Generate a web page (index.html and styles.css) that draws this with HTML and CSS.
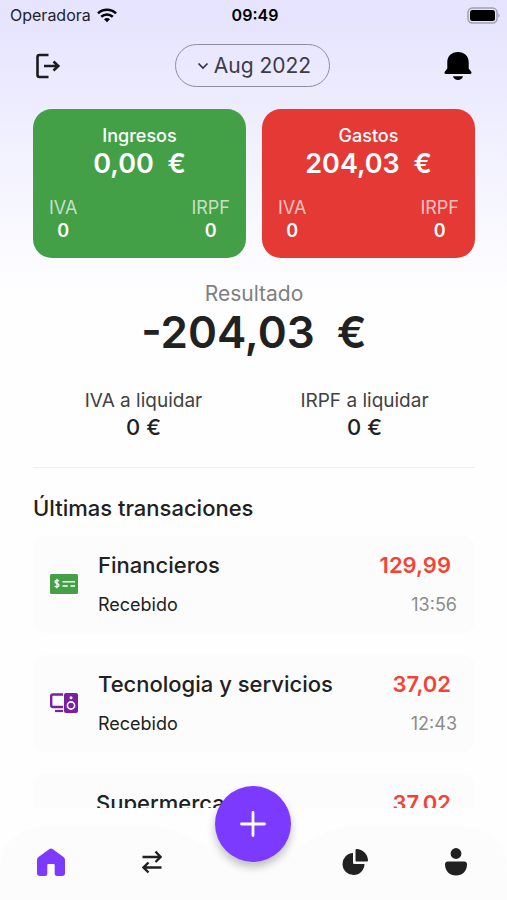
FILE: index.html
```html
<!DOCTYPE html>
<html lang="es">
<head>
    <meta charset="UTF-8">
    <meta name="viewport" content="width=device-width, initial-scale=1.0">
    <title>Resumen</title>
    <link rel="stylesheet" href="styles.css">
</head>
<body>
    <div class="app">
        <!-- Barra de estado -->
        <div class="status-bar">
            <div class="carrier">
                <span>Operadora</span>
                <svg width="20" height="15" viewBox="0 0 20 15" fill="none" stroke="#000" stroke-width="2.6">
                    <path d="M1 5.4C6 .6 14 .6 19 5.4"/>
                    <path d="M4.2 8.8c3.4-3 8.2-3 11.6 0"/>
                    <path d="M7 11.2c1.8-1.6 4.2-1.6 6 0L10 14.2z" fill="#000" stroke="none"/>
                </svg>
            </div>
            <span class="clock">09:49</span>
            <div class="battery">
                <svg width="34" height="17" viewBox="0 0 34 17">
                    <rect x="2" y="1" width="29" height="15" rx="4.5" fill="none" stroke="#a19fb0" stroke-width="1.5"/>
                    <rect x="4" y="3" width="25" height="11" rx="2.5" fill="#000"/>
                    <path d="M32.400 6.5c1.600.6 1.600 3.400 0 4z" fill="#a19fb0"/>
                </svg>
            </div>
        </div>

        <header class="top-bar">
            <button class="icon-button" type="button" aria-label="Salir">
                <svg width="26" height="26" viewBox="0 0 26 26" fill="none" stroke="#1b1b22" stroke-width="2.6">
                    <path d="M13.500 2H4.500Q2.500 2 2.500 4v18Q2.500 24 4.500 24h9"/>
                    <path d="M9 13h14M18.500 8.500 23.300 13l-4.800 4.500"/>
                </svg>
            </button>
            <button class="month" type="button">
                <svg width="12" height="8" viewBox="0 0 12 8" fill="none" stroke="#33333b" stroke-width="1.7">
                    <path d="M1.5 1.5 6 6l4.500-4.500"/>
                </svg>
                Aug 2022
            </button>
            <button class="icon-button" type="button" aria-label="Notificaciones">
                <svg width="28" height="30" viewBox="0 0 28 30" fill="#000">
                    <path d="M14 1C7.600 1 3.300 5.200 3.300 11v6.500L.8 20.800C0 22 .6 23 2 23h24c1.400 0 2-1 1.200-2.200l-2.500-3.300V11C24.700 5.200 20.400 1 14 1z"/>
                    <path d="M9 25.200h10c-.7 2.600-2.600 3.800-5 3.800s-4.300-1.200-5-3.800z"/>
                </svg>
            </button>
        </header>

        <main class="content">
            <section class="cards">
                <div class="card income">
                    <h2>Ingresos</h2>
                    <p class="amount">0,00&nbsp; €</p>
                    <div class="taxes">
                        <p>IVA <strong>0</strong></p>
                        <p>IRPF <strong>0</strong></p>
                    </div>
                </div>
                <div class="card expense">
                    <h2>Gastos</h2>
                    <p class="amount">204,03&nbsp; €</p>
                    <div class="taxes">
                        <p>IVA <strong>0</strong></p>
                        <p>IRPF <strong>0</strong></p>
                    </div>
                </div>
            </section>

            <section class="result">
                <h2>Resultado</h2>
                <p class="total">-204,03&nbsp; €</p>
                <div class="settle">
                    <p>IVA a liquidar <strong>0 €</strong></p>
                    <p>IRPF a liquidar <strong>0 €</strong></p>
                </div>
            </section>

            <section class="transactions">
                <h2>Últimas transaciones</h2>
                <ul>
                    <li class="transaction">
                        <svg width="28" height="20" viewBox="0 0 28 20">
                            <rect x="0" y="0" width="28" height="20" rx="1.5" fill="#43a047"/>
                            <path d="M9 7.200C8.300 6.200 5 6 5 7.900 5 9.900 9 9 9 11.300c0 2-3.300 2-4.300.7M7 4.800v9.400" fill="none" stroke="#fff" stroke-width="1.3"/>
                            <path d="M12.500 7.800H25M12.500 12h5.300M20.500 12H25" stroke="#fff" stroke-width="1.5"/>
                        </svg>
                        <div class="info">
                            <h3>Financieros</h3>
                            <p>Recebido</p>
                        </div>
                        <div class="value">
                            <strong>129,99</strong>
                            <time>13:56</time>
                        </div>
                    </li>
                    <li class="transaction">
                        <svg width="28" height="20" viewBox="0 0 28 20">
                            <path d="M13 1.500H3Q1.200 1.500 1.200 3v9.500Q1.200 14 3 14h10" fill="none" stroke="#7b1fa2" stroke-width="2.4"/>
                            <path d="M5 18h8" stroke="#7b1fa2" stroke-width="2.2"/>
                            <rect x="14" y="0" width="14" height="20" rx="2" fill="#7b1fa2"/>
                            <circle cx="21" cy="4.800" r="1.500" fill="#fff"/>
                            <circle cx="21" cy="12.500" r="3.600" fill="none" stroke="#fff" stroke-width="1.6"/>
                        </svg>
                        <div class="info">
                            <h3>Tecnologia y servicios</h3>
                            <p>Recebido</p>
                        </div>
                        <div class="value">
                            <strong>37,02</strong>
                            <time>12:43</time>
                        </div>
                    </li>
                    <li class="transaction">
                        <svg width="26" height="20" viewBox="0 0 28 20">
                            <path d="M1 2h4l3 11h13l3-8H6" fill="none" stroke="#1e88e5" stroke-width="2"/>
                        </svg>
                        <div class="info">
                            <h3>Supermercado</h3>
                            <p>Recebido</p>
                        </div>
                        <div class="value">
                            <strong>37,02</strong>
                            <time>12:40</time>
                        </div>
                    </li>
                </ul>
            </section>
        </main>

        <!-- Navegación inferior -->
        <nav class="bottom-nav">
            <svg class="nav-shape" viewBox="0 0 507 92" preserveAspectRatio="none" fill="#fcfcfc">
                <path d="M0 92V58C4 22 30 17 75 17h75c35 2 60 30 103 38 43-8 68-36 103-38h75c45 0 72 5 76 41v34z"/>
            </svg>
            <a href="#" aria-label="Inicio">
                <svg width="28" height="28" viewBox="0 0 28 28" fill="#7c3aff">
                    <path d="M12.500.9Q14 0 15.500.9L26.500 9Q28 10.200 28 12v13q0 3-3 3h-5q-2.300 0-2.300-2.300V17q0-1-1-1h-5.400q-1 0-1 1v8.700Q10.300 28 8 28H3q-3 0-3-3V12q0-1.800 1.500-3z"/>
                </svg>
            </a>
            <a href="#" aria-label="Movimientos">
                <svg width="20" height="24" viewBox="0 0 20 24" fill="none" stroke="#212121" stroke-width="2.4">
                    <path d="M.5 7h17.500M13.500 1.500 18.500 7l-5 5M19.500 17.500H2M6.500 12.500l-5 5 5 5"/>
                </svg>
            </a>
            <button class="add" type="button" aria-label="Añadir">
                <svg width="26" height="26" viewBox="0 0 26 26" stroke="#fff" stroke-width="2.800" stroke-linecap="round">
                    <path d="M13 1.500v23M1.500 13h23"/>
                </svg>
            </button>
            <a href="#" aria-label="Informes">
                <svg width="26" height="26" viewBox="0 0 26 26" fill="#212121">
                    <path d="M11 4v9.500q0 1.500 1.500 1.500H22.500A11 11 0 1 1 11 4z"/>
                    <path d="M13.500 1Q13.500 0 14.500 0A11.800 11.800 0 0 1 26 11.500q0 1-1 1H14.500q-1 0-1-1z"/>
                </svg>
            </a>
            <a href="#" aria-label="Perfil">
                <svg width="22" height="28" viewBox="0 0 22 28" fill="#212121">
                    <circle cx="11" cy="5.500" r="5.400"/>
                    <path d="M3 13.500h16q3 0 3 3C22 23 17.500 27.500 11 27.500S0 23 0 16.500q0-3 3-3z"/>
                </svg>
            </a>
        </nav>
    </div>
</body>
</html>
```

FILE: styles.css
```css
* {
    box-sizing: border-box;
}
body {
    margin: 0;
    font-family: Inter, Roboto, sans-serif;
    color: #212121;
    background-color: #fefefe;
}
h2, h3, p, ul {
    margin: 0;
    padding: 0;
    font-weight: 400;
}
svg {
    display: block;
}
button {
    font-family: inherit;
    border: none;
    background: none;
    padding: 0;
    cursor: pointer;
}
.app {
    height: 100vh;
    display: flex;
    flex-direction: column;
    background: linear-gradient(#e5e3fe 0, #eeedfe 110px, #fefeff 290px, #fefefe 320px);
}

/* Barra de estado */
.status-bar {
    display: grid;
    grid-template-columns: 1fr auto 1fr;
    align-items: center;
    height: 30px;
    padding: 0 7px 0 10px;
    font-size: 16px;
    color: #22222a;
}
.carrier {
    display: flex;
    align-items: center;
    gap: 6px;
}
.clock {
    font-weight: 600;
    color: #000;
}
.battery {
    justify-self: end;
}

/* Cabecera */
.top-bar {
    display: flex;
    justify-content: space-between;
    align-items: center;
    padding: 14px 35px 22px;
}
.month {
    display: flex;
    align-items: center;
    gap: 5px;
    height: 43px;
    padding: 0 18px 0 21px;
    border: 1px solid #8f8d9c;
    border-radius: 22px;
    font-size: 21px;
    color: #3c3c45;
}

/* Contenido */
.content {
    flex: 1;
    min-height: 0;
    padding: 0 32px 0 33px;
    overflow-y: auto;
    scrollbar-width: none;
}
.cards {
    display: grid;
    grid-template-columns: 1fr 1fr;
    gap: 16px;
}
.card {
    padding: 15px 16px 16px;
    border-radius: 19px;
    color: #fff;
    text-align: center;
}
.income {
    background-color: #43a047;
}
.expense {
    background-color: #e53935;
}
.card h2 {
    font-size: 18px;
    font-weight: 500;
    line-height: 24px;
}
.amount {
    font-size: 27px;
    font-weight: 600;
    line-height: 32px;
}
.taxes {
    display: flex;
    justify-content: space-between;
    margin-top: 16px;
    font-size: 18px;
    line-height: 23px;
    color: rgba(255, 255, 255, 0.7);
}
.taxes strong {
    display: block;
    font-weight: 600;
    color: #fff;
}
.result {
    padding: 23px 0 27px;
    border-bottom: 1px solid #f0f0f0;
    text-align: center;
}
.result h2 {
    font-size: 21px;
    line-height: 26px;
    color: #7f7f82;
}
.total {
    font-size: 44px;
    font-weight: 600;
    line-height: 50px;
}
.settle {
    display: grid;
    grid-template-columns: 1fr 1fr;
    margin-top: 31px;
    font-size: 19px;
    line-height: 26px;
    color: #424242;
}
.settle strong {
    display: block;
    font-size: 22px;
    font-weight: 500;
    color: #212121;
}

/* Transacciones */
.transactions h2 {
    margin: 26px 0 14px;
    font-size: 22px;
    font-weight: 500;
    line-height: 28px;
}
.transactions ul {
    display: grid;
    gap: 22px;
    list-style: none;
}
.transaction {
    display: flex;
    align-items: center;
    gap: 20px;
    padding: 14px 18px 16px 17px;
    border-radius: 12px;
    background-color: #fcfcfc;
}
.info {
    flex: 1;
}
.info h3,
.value strong {
    font-size: 22px;
    font-weight: 500;
    line-height: 30px;
}
.info p,
.value time {
    font-size: 18px;
    line-height: 24px;
    margin-top: 13px;
}
.value {
    text-align: right;
}
.value strong {
    display: block;
    padding-right: 6px;
    font-weight: 600;
    color: #f44336;
}
.value time {
    display: block;
    color: #8c8c8c;
}

/* Navegación inferior */
.bottom-nav {
    position: relative;
    display: grid;
    grid-template-columns: repeat(5, 1fr);
    justify-items: center;
    align-items: center;
    height: 92px;
    padding-top: 16px;
}
.nav-shape {
    position: absolute;
    inset: 0;
    width: 100%;
    height: 100%;
}
.bottom-nav a {
    position: relative;
}
.add {
    position: relative;
    display: flex;
    justify-content: center;
    align-items: center;
    width: 76px;
    height: 76px;
    margin: -38px 0 38px;
    border-radius: 50%;
    background-color: #7c3aff;
    box-shadow: 0 5px 9px rgba(0, 0, 0, 0.25);
}
```
